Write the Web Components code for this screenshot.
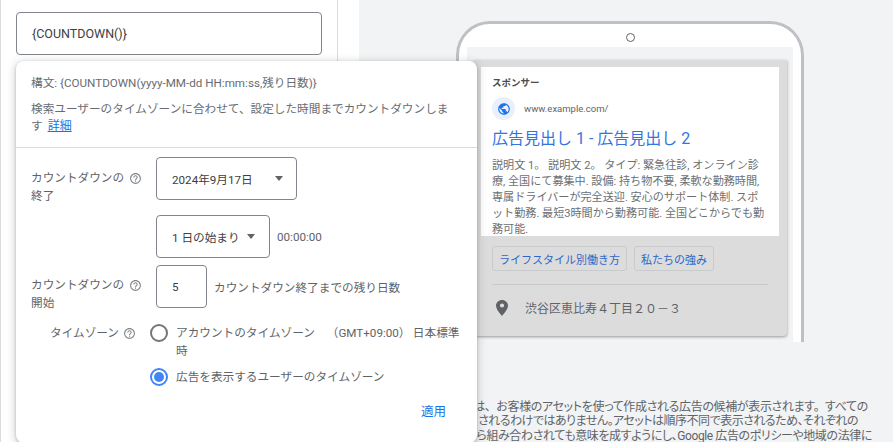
<!DOCTYPE html>
<html lang="ja">
<head>
<meta charset="utf-8">
<style>
  html, body { margin: 0; height: 100%; overflow: hidden; }
  body { font-family: Roboto, "Noto Sans CJK JP", sans-serif; }
</style>
</head>
<body>
<ads-page>
  <ads-popup slot="popup"></ads-popup>
  <phone-preview slot="preview"></phone-preview>
</ads-page>

<script>
const helpIcon = /*html*/`<svg width="13" height="13" viewBox="0 0 24 24" fill="#80868b"><path d="M11 18h2v-2h-2v2zm1-16C6.480 2 2 6.480 2 12s4.480 10 10 10 10-4.480 10-10S17.520 2 12 2zm0 18c-4.410 0-8-3.590-8-8s3.590-8 8-8 8 3.590 8 8-3.590 8-8 8zm0-14c-2.210 0-4 1.790-4 4h2c0-1.100.9-2 2-2s2 .9 2 2c0 2-3 1.750-3 5h2c0-2.250 3-2.500 3-5 0-2.210-1.790-4-4-4z"/></svg>`;

class AdsPage extends HTMLElement {
  constructor() {
    super();
    this.attachShadow({ mode: "open" });
    this.shadowRoot.innerHTML = /*html*/`
      <style>
        :host { display: flex; width: 893px; height: 442px; overflow: hidden; position: relative; background: #fff; }
        .left { width: 338px; border-left: 1px solid #dadce0; border-right: 1px solid #dadce0; padding: 12px 15px 0 15px; box-sizing: border-box; flex: none; }
        .field { width: 306px; height: 43px; box-sizing: border-box; border: 1px solid #80868b; border-radius: 4px; padding: 0 15px; display: flex; align-items: center; font-size: 12.5px; color: #3c4043; }
        .gap { width: 21px; flex: none; }
        .right { flex: 1; background: #f1f3f4; min-width: 0; }
        .popup { position: absolute; left: 16px; top: 61px; z-index: 2; }
      </style>
      <div class="left"><div class="field">{COUNTDOWN()}</div></div>
      <div class="gap"></div>
      <div class="right"><slot name="preview"></slot></div>
      <div class="popup"><slot name="popup"></slot></div>
    `;
  }
}

class AdsPopup extends HTMLElement {
  constructor() {
    super();
    this.attachShadow({ mode: "open" });
    this.shadowRoot.innerHTML = /*html*/`
      <style>
        :host { display: block; width: 461px; height: 382px; background: #fff; border-radius: 8px; box-shadow: 0 1px 3px rgba(60,64,67,.3), 0 2px 8px 2px rgba(60,64,67,.18); font-size: 11.65px; color: #5f6368; }
        .head { padding: 14px 15px 0 15px; height: 72px; border-bottom: 1px solid #dadce0; line-height: 17.5px; color: #686c71; }
        .head p { margin: 0; white-space: nowrap; }
        .head .desc { margin-top: 8px; }
        .head .more { display: flex; gap: 5px; }
        a { color: #1a73e8; text-decoration: underline; font-size: 12px; }
        .body { display: grid; grid-template-columns: 125px 1fr; padding: 0 15px; }
        .lab { display: flex; align-items: flex-start; line-height: 18px; white-space: nowrap; }
        .lab svg { margin: 3px 0 0 5px; flex: none; }
        .box { box-sizing: border-box; border: 1px solid #80868b; border-radius: 4px; height: 43px; display: flex; align-items: center; color: #3c4043; }
        .arrow { width: 0; height: 0; border-left: 4.5px solid transparent; border-right: 4.5px solid transparent; border-top: 5px solid #5f6368; }
        .row { display: flex; align-items: center; }
        .tz { grid-column: 1 / 3; display: grid; grid-template-columns: 119px 1fr; margin-top: 16px; }
        .tzlab { display: flex; justify-content: flex-end; gap: 4px; line-height: 17.5px; padding: 1px 14px 0 0; }
        .tzlab svg { margin-top: 2px; }
        .opt { display: flex; gap: 8px; line-height: 17.5px; width: 311px; }
        .opt span { padding-top: 1px; }
        .radio { width: 18px; height: 18px; box-sizing: border-box; border-radius: 50%; border: 2px solid #757575; flex: none; }
        .radio.on { border-color: #4285f4; position: relative; }
        .radio.on::after { content: ""; position: absolute; inset: 2px; border-radius: 50%; background: #4285f4; }
        .apply { color: #1a73e8; text-align: right; padding-right: 31px; margin-top: 16.5px; font-size: 12.5px; line-height: 18px; }
      </style>
      <div class="head">
        <p>構文: {COUNTDOWN(yyyy-MM-dd HH:mm:ss,残り日数)}</p>
        <p class="desc">検索ユーザーのタイムゾーンに合わせて、設定した時間までカウントダウンしま</p>
        <p class="more"><span>す</span><a>詳細</a></p>
      </div>
      <div class="body">
        <div class="lab" style="margin-top:21px;height:31px"><span>カウントダウンの<br>終了</span>${helpIcon}</div>
        <div class="box" style="width:141px;margin-top:9px;padding:0 13px 0 15px;justify-content:space-between"><span>2024年9月17日</span><i class="arrow"></i></div>
        <div></div>
        <div class="row" style="margin-top:15px;gap:7px">
          <div class="box" style="width:114px;padding:0 14px 0 15px;justify-content:space-between"><span>1 日の始まり</span><i class="arrow"></i></div>
          <span>00:00:00</span>
        </div>
        <div class="lab" style="margin-top:18px;height:30px"><span>カウントダウンの<br>開始</span>${helpIcon}</div>
        <div class="row" style="margin-top:7px;gap:7px">
          <div class="box" style="width:51px;padding:0 15px">5</div>
          <span>カウントダウン終了までの残り日数</span>
        </div>
        <div class="tz">
          <div class="tzlab"><span>タイムゾーン</span>${helpIcon}</div>
          <div>
            <div class="opt"><i class="radio"></i><span>アカウントのタイムゾーン&ensp;&ensp;（GMT+09:00）&thinsp;日本標準時</span></div>
            <div class="opt" style="margin-top:8px"><i class="radio on"></i><span>広告を表示するユーザーのタイムゾーン</span></div>
          </div>
        </div>
      </div>
      <div class="apply">適用</div>
    `;
  }
}

class PhonePreview extends HTMLElement {
  constructor() {
    super();
    this.attachShadow({ mode: "open" });
    this.shadowRoot.innerHTML = /*html*/`
      <style>
        :host { display: block; height: 442px; padding: 21px 0 0 97px; box-sizing: border-box; overflow: hidden; }
        .phone { width: 348px; height: 321px; box-sizing: border-box; background: #fff; border: 3px solid #bdc1c6; border-bottom: 0; border-radius: 34px 34px 0 0; padding: 0 8px; }
        .cam { width: 9px; height: 9px; box-sizing: border-box; border: 1px solid #5f6368; border-radius: 50%; margin: 9px auto 0; }
        .screen { background: #f1f3f4; height: 295px; margin-top: 5px; padding: 13px 6px 0 7px; box-sizing: border-box; }
        .card { background: #dcdcdc; height: 276px; border-radius: 0 0 4px 4px; box-shadow: 0 1px 3px rgba(60,64,67,.5); padding: 7px 8px 0 7px; box-sizing: border-box; }
        .white { background: #fff; height: 169px; padding: 9px 11px 0 11px; box-sizing: border-box; overflow: hidden; }
        .spon { font-size: 9.5px; font-weight: 700; color: #4a4d50; line-height: 14px; }
        .site { display: flex; align-items: center; gap: 9px; margin-top: 7px; font-size: 9.5px; color: #5f6368; }
        .globe { width: 23px; height: 23px; border-radius: 50%; background: #e8f0fe; display: flex; align-items: center; justify-content: center; }
        .title { color: #3574e0; font-size: 16px; line-height: 24px; margin-top: 7px; white-space: nowrap; }
        .desc { font-size: 11.1px; color: #6b6f74; line-height: 16px; margin-top: 7px; padding-right: 2px; }
        .chips { display: flex; gap: 7px; margin: 10px 0 0 11px; }
        .chip { height: 25px; box-sizing: border-box; border: 1px solid #c8cacc; border-radius: 3px; padding: 0 6px; font-size: 11px; color: #2f66c8; display: flex; align-items: center; }
        .rule { height: 1px; background: #c6c8ca; margin: 13px 11px 0 11px; }
        .addr { display: flex; align-items: center; gap: 17px; margin: 14px 0 0 15px; font-size: 12px; color: #5f6368; }
        .note { margin: 57.5px 0 0 -97px; font-size: 12px; line-height: 14.6px; color: #5f6368; white-space: nowrap; text-align: right; font-feature-settings: "palt"; }
        .note div:nth-child(1) { padding-right: 25px; letter-spacing: -.35px; }
        .note div:nth-child(2) { padding-right: 35px; letter-spacing: -.5px; }
        .note div:nth-child(3) { padding-right: 21px; letter-spacing: -.4px; }
      </style>
      <div class="phone">
        <div class="cam"></div>
        <div class="screen">
          <div class="card">
            <div class="white">
              <div class="spon">スポンサー</div>
              <div class="site">
                <div class="globe"><svg width="14" height="14" viewBox="0 0 24 24" fill="#1a73e8"><path d="M12 2C6.480 2 2 6.480 2 12s4.480 10 10 10 10-4.480 10-10S17.520 2 12 2zm-1 17.930c-3.950-.49-7-3.850-7-7.930 0-.62.08-1.210.21-1.790L9 15v1c0 1.100.9 2 2 2v1.930zm6.900-2.540c-.26-.81-1-1.390-1.900-1.390h-1v-3c0-.55-.45-1-1-1H8v-2h2c.55 0 1-.45 1-1V7h2c1.100 0 2-.9 2-2v-.41c2.930 1.190 5 4.060 5 7.410 0 2.080-.8 3.970-2.100 5.390z"/></svg></div>
                <span>www.example.com/</span>
              </div>
              <div class="title">広告見出し 1 - 広告見出し 2</div>
              <div class="desc">説明文 1。 説明文 2。 タイプ: 緊急往診, オンライン診療, 全国にて募集中. 設備: 持ち物不要, 柔軟な勤務時間, 専属ドライバーが完全送迎. 安心のサポート体制. スポット勤務. 最短3時間から勤務可能. 全国どこからでも勤務可能.</div>
            </div>
            <div class="chips"><div class="chip">ライフスタイル別働き方</div><div class="chip">私たちの強み</div></div>
            <div class="rule"></div>
            <div class="addr">
              <svg width="12" height="16" viewBox="5 2 14 20" fill="#5f6368" preserveAspectRatio="none"><path d="M12 2C8.130 2 5 5.130 5 9c0 5.250 7 13 7 13s7-7.750 7-13c0-3.870-3.130-7-7-7zm0 9.500a2.500 2.500 0 0 1 0-5 2.500 2.500 0 0 1 0 5z"/></svg>
              <span>渋谷区恵比寿４丁目２０－３</span>
            </div>
          </div>
        </div>
      </div>
      <div class="note">
        <div>は、&ensp;お客様のアセットを使って作成される広告の候補が表示されます。&ensp;すべての</div>
        <div>されるわけではありません。アセットは順序不同で表示されるため、それぞれの</div>
        <div>ら組み合わされても意味を成すようにし、Google 広告のポリシーや地域の法律に</div>
      </div>
    `;
  }
}

customElements.define("ads-page", AdsPage);
customElements.define("ads-popup", AdsPopup);
customElements.define("phone-preview", PhonePreview);
</script>
</body>
</html>
